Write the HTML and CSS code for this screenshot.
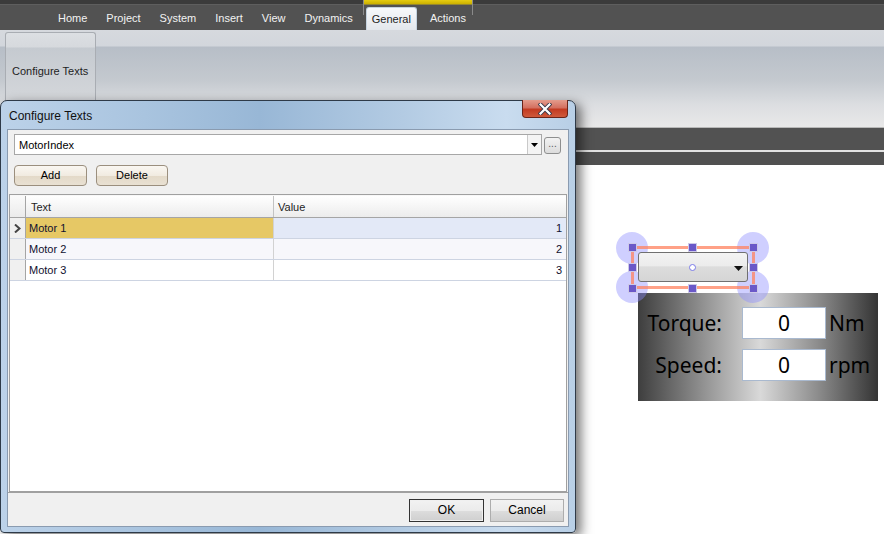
FILE: index.html
```html
<!DOCTYPE html>
<html>
<head>
<meta charset="utf-8">
<link rel="stylesheet" href="styles.css">
</head>
<body>
<div class="app">
  <div class="header">
    <div class="topstrip"></div>
    <div class="tabbar">
      <span class="tab">Home</span>
      <span class="tab">Project</span>
      <span class="tab">System</span>
      <span class="tab">Insert</span>
      <span class="tab">View</span>
      <span class="tab">Dynamics</span>
      <span class="tab active">General</span>
      <span class="tab">Actions</span>
    </div>
    <div class="ctxband"></div>
  </div>
  <div class="ribbon">
    <div class="group">Configure Texts</div>
  </div>
  <div class="darkbar">
    <div class="db-a"></div>
    <div class="db-b"></div>
    <div class="db-c"></div>
  </div>
  <div class="canvas">
    <div class="panel">
      <div class="plabel">Torque:</div><div class="pbox">0</div><div class="punit">Nm</div>
      <div class="plabel">Speed:</div><div class="pbox">0</div><div class="punit">rpm</div>
    </div>
    <div class="knob k1"></div>
    <div class="knob k2"></div>
    <div class="knob k3"></div>
    <div class="knob k4"></div>
    <div class="selrect"></div>
    <div class="selcombo">
      <span class="dot"></span>
      <svg class="selarrow" width="9" height="5" viewBox="0 0 9 5"><path d="M0 0H9L4.5 5Z" fill="#111"/></svg>
    </div>
    <div class="hd h1"></div><div class="hd h2"></div><div class="hd h3"></div>
    <div class="hd h4"></div><div class="hd h5"></div>
    <div class="hd h6"></div><div class="hd h7"></div><div class="hd h8"></div>
  </div>
</div>

<div class="dialog">
  <div class="titlebar">
    <span class="title">Configure Texts</span>
    <div class="closebtn">
      <svg width="14" height="12" viewBox="0 0 14 12">
        <path d="M2.5 1.5L11.5 10.5M11.5 1.5L2.5 10.5" stroke="#3a3a4a" stroke-width="4" stroke-linecap="square"/>
        <path d="M2.5 1.5L11.5 10.5M11.5 1.5L2.5 10.5" stroke="#ffffff" stroke-width="2.2" stroke-linecap="square"/>
      </svg>
    </div>
  </div>
  <div class="client">
    <div class="comborow">
      <div class="combo">
        <span class="combotext">MotorIndex</span>
        <span class="combodrop"><svg width="7" height="4" viewBox="0 0 7 4"><path d="M0 0H7L3.5 4Z" fill="#000"/></svg></span>
      </div>
      <div class="ellipsis">...</div>
    </div>
    <div class="btnrow">
      <div class="wbtn add">Add</div>
      <div class="wbtn del">Delete</div>
    </div>
    <div class="grid">
      <div class="grow ghead">
        <div class="rh"></div>
        <div class="c1">Text</div>
        <div class="c2">Value</div>
      </div>
      <div class="grow r1">
        <div class="rh"><svg width="7" height="9" viewBox="0 0 7 9"><path d="M1 0.5L5.5 4.5L1 8.5" fill="none" stroke="#444" stroke-width="2"/></svg></div>
        <div class="c1">Motor 1</div>
        <div class="c2">1</div>
      </div>
      <div class="grow r2">
        <div class="rh"></div>
        <div class="c1">Motor 2</div>
        <div class="c2">2</div>
      </div>
      <div class="grow r3">
        <div class="rh"></div>
        <div class="c1">Motor 3</div>
        <div class="c2">3</div>
      </div>
    </div>
    <div class="footer">
      <div class="fbtn ok">OK</div>
      <div class="fbtn">Cancel</div>
    </div>
  </div>
</div>
</body>
</html>
```

FILE: styles.css
```css
html, body {
  margin: 0;
  padding: 0;
  width: 884px;
  height: 534px;
  overflow: hidden;
  font-family: "Liberation Sans", Arial, sans-serif;
}

.app {
  display: flex;
  flex-direction: column;
  width: 884px;
  height: 534px;
}

.header {
  position: relative;
  height: 30px;
  background: #525252;
}

.topstrip {
  height: 5px;
  background: #3b3b3b;
  border-bottom: 1px solid #5e5e5e;
  box-sizing: border-box;
}

.tabbar {
  display: flex;
  align-items: flex-end;
  gap: 7px;
  height: 25px;
  padding-left: 52px;
  box-sizing: border-box;
}

.tab {
  font-size: 11px;
  color: #f2f2f2;
  padding: 0 6px;
  height: 23px;
  line-height: 23px;
}

.tab.active {
  color: #1d1d1d;
  background: linear-gradient(#f7f9fb, #e3e7ec);
  border: 1px solid #c5d3e0;
  border-bottom: none;
  border-radius: 3px 3px 0 0;
  height: 23px;
  line-height: 22px;
  box-sizing: border-box;
  padding: 0 5px;
}

.ctxband {
  position: absolute;
  left: 363px;
  top: 0;
  width: 108px;
  height: 15px;
  border-left: 1px solid #8a8a8a;
  border-right: 1px solid #8a8a8a;
  background: linear-gradient(#e6cc10 0, #cbb000 4px, transparent 5px);
}

.ribbon {
  height: 98px;
  background: linear-gradient(#d6d9de 0, #d2d6dc 16px, #b7bec7 17px, #c4c9cf 50px, #dcdee1 75px, #e9e9e9 97px);
  border-bottom: 1px solid #b8b8b8;
  box-sizing: border-box;
  padding: 2px 0 0 5px;
}

.group {
  width: 91px;
  height: 96px;
  box-sizing: border-box;
  border: 1px solid #a9adb3;
  border-bottom: none;
  border-radius: 3px 3px 0 0;
  background: linear-gradient(#dcdfe3 0, #d6d9dd 14px, #c5cad0 15px, #d2d5d9 60px, #dfe0e2);
  font-size: 11px;
  color: #1e1e1e;
  padding: 32px 0 0 6px;
}

.darkbar {
  display: flex;
  flex-direction: column;
  height: 37px;
}
.db-a { height: 22px; background: #525252; }
.db-b { height: 2px; background: #e2e2e2; }
.db-c { height: 13px; background: #505050; }

.canvas {
  position: relative;
  flex: 1;
  background: #ffffff;
}

.knob {
  position: absolute;
  width: 32px;
  height: 32px;
  border-radius: 50%;
  background: rgba(140, 140, 255, 0.42);
}
.k1 { left: 616px; top: 67px; }
.k2 { left: 737px; top: 67px; }
.k3 { left: 616px; top: 106px; }
.k4 { left: 737px; top: 106px; }

.panel {
  position: absolute;
  left: 638px;
  top: 128px;
  width: 240px;
  height: 108px;
  box-sizing: border-box;
  background: linear-gradient(to right, #3e3e3e 0%, #9a9a9a 30%, #d9d9d9 51%, #8c8c8c 75%, #343434 100%);
  display: grid;
  grid-template-columns: 82px 84px auto;
  grid-auto-rows: 32px;
  row-gap: 10px;
  align-items: center;
  padding-top: 14px;
  font-family: "Noto Sans", "Open Sans", sans-serif;
  font-size: 21px;
  color: #000;
}
.plabel {
  text-align: right;
  margin-right: -2px;
}
.pbox {
  grid-column: 2;
  margin-left: 22px;
  width: 84px;
  height: 32px;
  box-sizing: border-box;
  background: #fff;
  border: 1px solid #a9b9cf;
  text-align: center;
  line-height: 30px;
}
.punit {
  margin-left: 25px;
}

.selrect {
  position: absolute;
  left: 631px;
  top: 81px;
  width: 124px;
  height: 43px;
  box-sizing: border-box;
  border: 3px solid rgba(255, 130, 95, 0.75);
}

.selcombo {
  position: absolute;
  left: 638px;
  top: 87px;
  width: 110px;
  height: 30px;
  box-sizing: border-box;
  border: 1px solid #707070;
  border-radius: 3px;
  background: linear-gradient(#f3f3f3 0, #ececec 45%, #dcdcdc 50%, #d5d5d5 100%);
}
.dot {
  position: absolute;
  left: 50px;
  top: 11px;
  width: 5px;
  height: 5px;
  border: 1px solid #7a7ae8;
  border-radius: 50%;
  background: #fff;
}
.selarrow {
  position: absolute;
  left: 95px;
  top: 13px;
}

.hd {
  position: absolute;
  width: 7px;
  height: 7px;
  background: #6a58c8;
  border: 1px solid rgba(230, 230, 240, 0.8);
}
.h1 { left: 628px; top: 78px; }
.h2 { left: 688px; top: 78px; }
.h3 { left: 749px; top: 78px; }
.h4 { left: 628px; top: 98px; }
.h5 { left: 749px; top: 98px; }
.h6 { left: 628px; top: 119px; }
.h7 { left: 688px; top: 119px; }
.h8 { left: 749px; top: 119px; }

/* Dialog window */
.dialog {
  position: absolute;
  left: 0;
  top: 100px;
  width: 576px;
  height: 433px;
  box-sizing: border-box;
  border: 1px solid #2e3a48;
  border-radius: 7px 7px 4px 4px;
  background: linear-gradient(to right, #bcd2e9 0%, #a9c4df 25%, #98b7d6 45%, #b3cbe3 70%, #c9dcef 88%, #b8cfe6 100%);
  box-shadow: 5px 4px 12px rgba(0, 0, 0, 0.55);
  padding: 0 6px 5px 6px;
  display: flex;
  flex-direction: column;
}

.titlebar {
  position: relative;
  height: 28px;
  display: flex;
  align-items: center;
}
.title {
  font-size: 12px;
  color: #101010;
  padding-left: 2px;
  padding-top: 2px;
}
.closebtn {
  position: absolute;
  left: 515px;
  top: -1px;
  width: 46px;
  height: 18px;
  box-sizing: border-box;
  border: 1px solid #6b2418;
  border-top: none;
  border-radius: 0 0 4px 4px;
  background: linear-gradient(#e49c8c 0, #d47060 45%, #c33b22 55%, #cf5a3c 100%);
  display: flex;
  align-items: center;
  justify-content: center;
}

.client {
  flex: 1;
  background: #f0f0f0;
  border: 1px solid #8a9bb0;
  display: flex;
  flex-direction: column;
}

.comborow {
  display: flex;
  align-items: flex-start;
  margin: 4px 0 0 6px;
}
.combo {
  width: 528px;
  height: 21px;
  box-sizing: border-box;
  border: 1px solid #a7a7a7;
  background: #fff;
  display: flex;
  align-items: center;
}
.combotext {
  flex: 1;
  font-size: 11px;
  color: #000;
  padding-left: 4px;
}
.combodrop {
  width: 13px;
  height: 19px;
  border-left: 1px solid #c9c9c9;
  background: #f4f4f4;
  display: flex;
  align-items: center;
  justify-content: center;
}
.ellipsis {
  margin: 3px 0 0 2px;
  width: 17px;
  height: 17px;
  box-sizing: border-box;
  border: 1px solid #8e8f8f;
  border-radius: 3px;
  background: linear-gradient(#f2f2f2, #dcdcdc);
  font-size: 10px;
  line-height: 11px;
  text-align: center;
  color: #5b5b5b;
}

.btnrow {
  display: flex;
  gap: 9px;
  margin: 10px 0 0 6px;
}
.wbtn {
  height: 21px;
  box-sizing: border-box;
  border: 1px solid #9b8f7e;
  border-radius: 4px;
  background: linear-gradient(#faf7f2 0, #f1ebe1 50%, #e3d9c8 52%, #e9e1d3 100%);
  font-size: 11px;
  color: #000;
  text-align: center;
  line-height: 19px;
}
.add { width: 73px; }
.del { width: 72px; }

.grid {
  margin: 8px 1px 0 1px;
  height: 298px;
  box-sizing: border-box;
  border: 1px solid #a0a0a0;
  background: #fff;
  display: flex;
  flex-direction: column;
  font-size: 11px;
  color: #101030;
}
.grow {
  display: flex;
  height: 21px;
  border-bottom: 1px solid #cdd4e2;
  box-sizing: border-box;
}
.grow.ghead {
  height: 23px;
  background: linear-gradient(#ffffff, #ececec);
  border-bottom: 1px solid #a5a5a5;
  border-top: 1px solid #f8f8f8;
  color: #1e1e1e;
}
.rh {
  width: 16px;
  box-sizing: border-box;
  border-right: 1px solid #a5a5a5;
  background: #f0f0f0;
  display: flex;
  align-items: center;
  justify-content: center;
}
.ghead .rh {
  background: linear-gradient(#fafafa, #ebebeb);
}
.c1 {
  width: 248px;
  box-sizing: border-box;
  border-right: 1px solid #d2d2d2;
  padding-left: 3px;
  display: flex;
  align-items: center;
}
.ghead .c1 { padding-left: 5px; border-right: 1px solid #c3c3c3; }
.c2 {
  flex: 1;
  display: flex;
  align-items: center;
  justify-content: flex-end;
  padding-right: 4px;
}
.ghead .c2 { justify-content: flex-start; padding-left: 4px; }
.r1 .c1 { background: #e6c865; }
.r1 .c2 { background: #e3e9f7; }
.r2 .c1, .r2 .c2 { background: #f7f7fb; }

.footer {
  flex: 1;
  display: flex;
  justify-content: flex-end;
  gap: 6px;
  padding: 6px 4px 0 0;
  border-top: 1px solid #a0a0a0;
}
.fbtn {
  width: 74px;
  height: 23px;
  box-sizing: border-box;
  border: 1px solid #adadad;
  background: linear-gradient(#f2f2f2 0, #ebebeb 50%, #dddddd 51%, #cfcfcf 100%);
  font-size: 12px;
  color: #000;
  text-align: center;
  line-height: 21px;
}
.fbtn.ok {
  width: 75px;
  border: 1px solid #333;
  box-shadow: inset 0 0 0 1px #f0f0f0;
}
```
